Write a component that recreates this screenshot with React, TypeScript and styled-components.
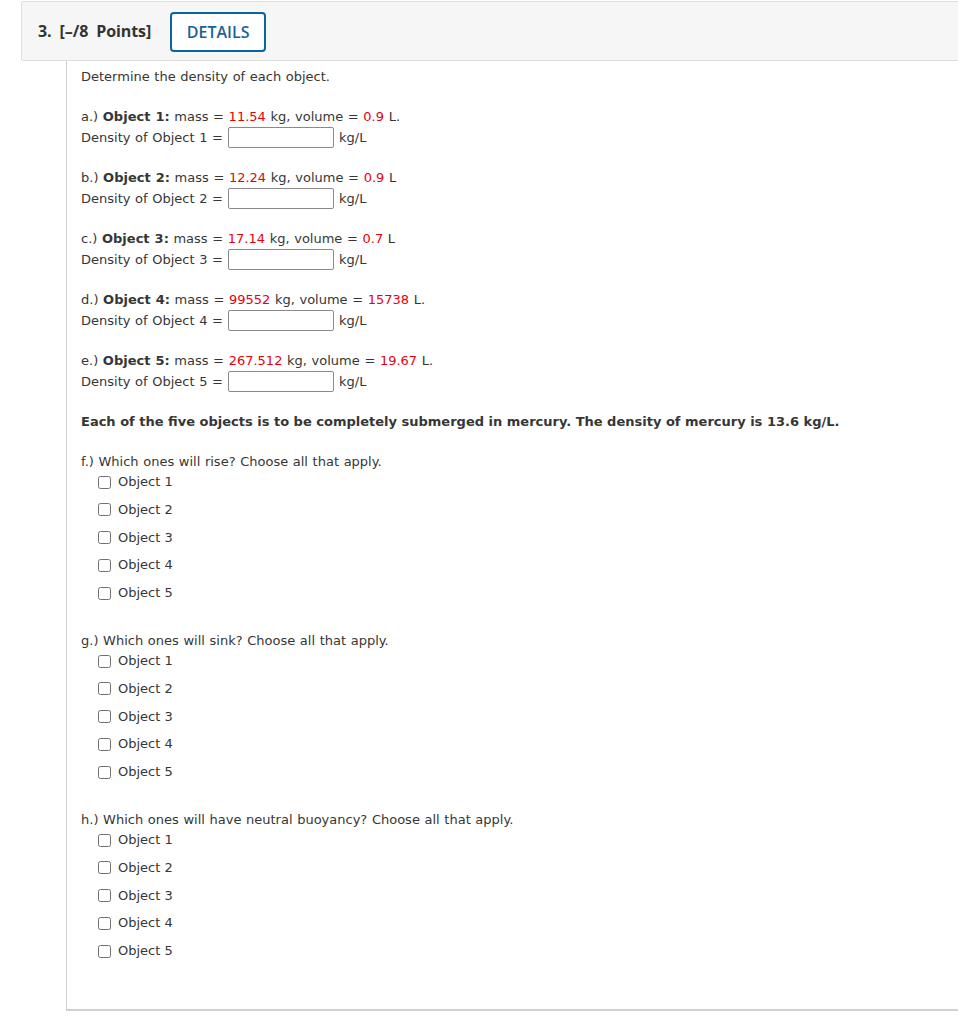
import React from "react";
import styled, { createGlobalStyle } from "styled-components";

const Global = createGlobalStyle`
  html, body { margin: 0; padding: 0; background: #fff; overflow: hidden; }
  body { font-family: "DejaVu Sans", Verdana, sans-serif; }
`;

const Page = styled.div`
  padding: 1px 0 0 21px;
  width: 958px;
  box-sizing: border-box;
`;

const Header = styled.div`
  display: flex;
  align-items: center;
  gap: 19px;
  height: 58px;
  width: 960px;
  padding-left: 16px;
  box-sizing: content-box;
  background: #f6f6f6;
  border: 1px solid #dedede;
  border-radius: 2px 0 0 2px;
`;

const Points = styled.div`
  font-family: "Open Sans", sans-serif;
  font-weight: 700;
  font-size: 16px;
  color: #333;
  letter-spacing: -0.1px;
  word-spacing: 4px;
`;

const DetailsButton = styled.button`
  height: 40px;
  width: 96px;
  margin-top: 1px;
  border: 2px solid #0a64a0;
  border-radius: 4px;
  background: #fff;
  color: #1c5f97;
  font-family: "Open Sans", sans-serif;
  font-weight: 600;
  font-size: 16px;
  padding: 0;
  cursor: pointer;
`;

const Panel = styled.div`
  margin-left: 45px;
  width: 900px;
  border-left: 1px solid #cfcfcf;
  border-bottom: 2px solid #d0d0d0;
  padding: 6px 0 40px 14px;
  font-size: 13px;
  line-height: 20px;
  color: #363636;
`;

const Line = styled.div<{ $tall?: boolean; $tight?: boolean }>`
  display: flex;
  align-items: center;
  height: ${(p) => (p.$tall ? "21px" : "20px")};
  white-space: pre;
  word-spacing: ${(p) => (p.$tight ? "0" : "0.5px")};
`;

const Blank = styled.div`
  height: 20px;
`;

const Red = styled.span`
  color: #e8000b;
`;

const B = styled.span`
  font-weight: 700;
`;

const Input = styled.input`
  width: 106px;
  height: 21px;
  box-sizing: border-box;
  border: 1px solid #8a8a8a;
  border-radius: 2px;
  margin: 0 5px;
  padding: 0;
  background: #fff;
`;

const Options = styled.div`
  display: flex;
  flex-direction: column;
  gap: 7.75px;
  padding-left: 17px;
  margin-bottom: 8px;
`;

const Option = styled.label`
  display: flex;
  align-items: center;
  height: 20px;
  gap: 7px;
  color: #363636;
`;

const Box = styled.span`
  width: 11px;
  height: 11px;
  border: 1px solid #707070;
  border-radius: 2.5px;
  background: #fff;
  flex: none;
`;

const objects = [
  { l: "a", m: "11.54", v: "0.9", dot: true },
  { l: "b", m: "12.24", v: "0.9", dot: false },
  { l: "c", m: "17.14", v: "0.7", dot: false },
  { l: "d", m: "99552", v: "15738", dot: true },
  { l: "e", m: "267.512", v: "19.67", dot: true },
];

const questions = [
  { l: "f", q: "Which ones will rise? Choose all that apply." },
  { l: "g", q: "Which ones will sink? Choose all that apply." },
  { l: "h", q: "Which ones will have neutral buoyancy? Choose all that apply." },
];

export default function App() {
  return (
    <>
      <Global />
      <Page>
        <Header>
          <Points>3. [–/8 Points]</Points>
          <DetailsButton>DETAILS</DetailsButton>
        </Header>
        <Panel>
          <Line>Determine the density of each object.</Line>
          <Blank />
          {objects.map((o, i) => (
            <React.Fragment key={o.l}>
              <Line>
                {o.l}.) <B>Object {i + 1}:</B> mass = <Red>{o.m}</Red> kg, volume = <Red>{o.v}</Red> L{o.dot ? "." : ""}
              </Line>
              <Line $tall>
                Density of Object {i + 1} =<Input type="text" />kg/L
              </Line>
              <Blank />
            </React.Fragment>
          ))}
          <Line $tight>
            <B>Each of the five objects is to be completely submerged in mercury. The density of mercury is 13.6 kg/L.</B>
          </Line>
          <Blank />
          {questions.map((q, qi) => (
            <React.Fragment key={q.l}>
              <Line>
                {q.l}.) {q.q}
              </Line>
              <Options>
                {[1, 2, 3, 4, 5].map((n) => (
                  <Option key={n}>
                    <Box />
                    Object {n}
                  </Option>
                ))}
              </Options>
              {qi < questions.length - 1 && <Blank />}
            </React.Fragment>
          ))}
        </Panel>
      </Page>
    </>
  );
}
